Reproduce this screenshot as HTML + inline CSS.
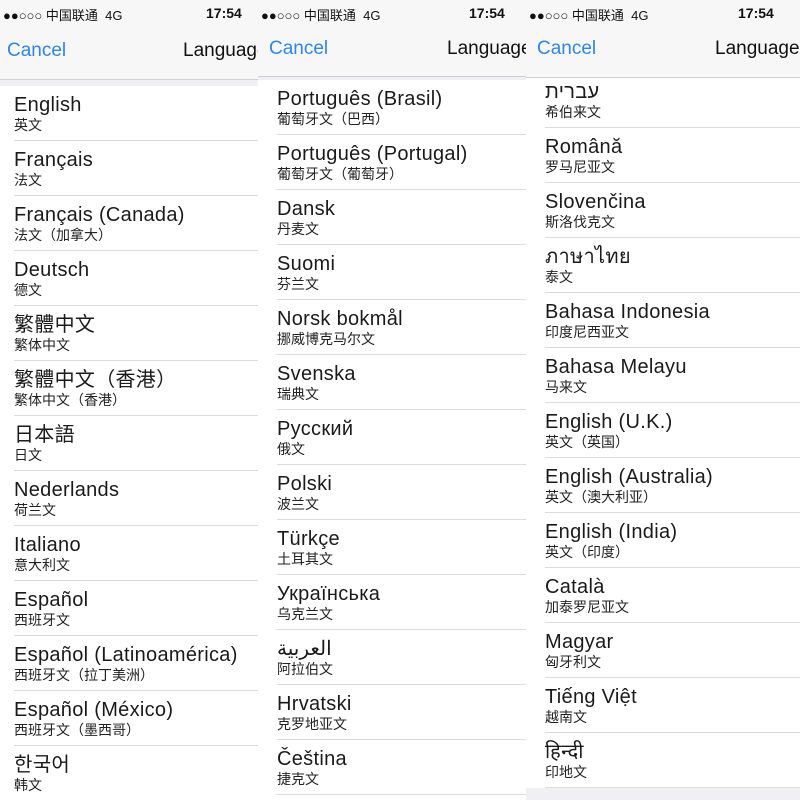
<!DOCTYPE html>
<html><head><meta charset="utf-8"><style>
*{margin:0;padding:0;box-sizing:border-box}
body{width:800px;height:800px;overflow:hidden;background:#fff;font-family:"Liberation Sans","Noto Sans CJK SC",sans-serif;position:relative}
.p{position:absolute;top:0;height:800px;overflow:hidden;background:#fff}
.nav{position:absolute;left:0;right:0;top:0;background:#f7f7f7;border-bottom:1px solid #cfcfcf;z-index:2}
.st{position:absolute;top:5px;font-size:13px;color:#111;white-space:nowrap}
.tm{position:absolute;top:5px;font-size:14px;font-weight:bold;color:#111}
.cancel{position:absolute;font-size:19px;color:#2f86e4}
.title{position:absolute;font-size:19px;color:#111;white-space:nowrap}
.gap{position:absolute;left:0;right:0;background:#efeff4;z-index:1}
.list{position:absolute;left:0;right:0}
.r{height:55px;position:relative;}
.r:after{content:"";position:absolute;left:0;right:0;bottom:0;height:1px;background:#dcdcdc}
.t{position:absolute;top:7px;font-size:20px;color:#1a1a1a;white-space:nowrap;line-height:24px;letter-spacing:0.3px}
.s{position:absolute;top:30px;font-size:14px;color:#222;white-space:nowrap;line-height:18px}
</style></head><body>

<div class="p" style="left:0;width:258px">
 <div class="nav" style="height:80px">
  <div class="st" style="left:3px">●●○○○ 中国联通 &nbsp;4G</div>
  <div class="tm" style="left:206px">17:54</div>
  <div class="cancel" style="left:7px;top:40px">Cancel</div>
  <div class="title" style="left:183px;top:40px">Language</div>
 </div>
 <div class="gap" style="top:80px;height:6px"></div>
 <div class="list" style="top:86px;left:14px">
  <div class="r"><div class="t">English</div><div class="s">英文</div></div>
  <div class="r"><div class="t">Français</div><div class="s">法文</div></div>
  <div class="r"><div class="t">Français (Canada)</div><div class="s">法文（加拿大）</div></div>
  <div class="r"><div class="t">Deutsch</div><div class="s">德文</div></div>
  <div class="r"><div class="t">繁體中文</div><div class="s">繁体中文</div></div>
  <div class="r"><div class="t">繁體中文（香港）</div><div class="s">繁体中文（香港）</div></div>
  <div class="r"><div class="t">日本語</div><div class="s">日文</div></div>
  <div class="r"><div class="t">Nederlands</div><div class="s">荷兰文</div></div>
  <div class="r"><div class="t">Italiano</div><div class="s">意大利文</div></div>
  <div class="r"><div class="t">Español</div><div class="s">西班牙文</div></div>
  <div class="r"><div class="t">Español (Latinoamérica)</div><div class="s">西班牙文（拉丁美洲）</div></div>
  <div class="r"><div class="t">Español (México)</div><div class="s">西班牙文（墨西哥）</div></div>
  <div class="r"><div class="t">한국어</div><div class="s">韩文</div></div>
 </div>
</div>

<div class="p" style="left:258px;width:268px">
 <div class="nav" style="height:77px">
  <div class="st" style="left:3px">●●○○○ 中国联通 &nbsp;4G</div>
  <div class="tm" style="left:211px">17:54</div>
  <div class="cancel" style="left:11px;top:38px">Cancel</div>
  <div class="title" style="left:189px;top:38px">Language</div>
 </div>
 <div class="gap" style="top:77px;height:3px"></div>
 <div class="list" style="top:80px;left:19px">
  <div class="r"><div class="t">Português (Brasil)</div><div class="s">葡萄牙文（巴西）</div></div>
  <div class="r"><div class="t">Português (Portugal)</div><div class="s">葡萄牙文（葡萄牙）</div></div>
  <div class="r"><div class="t">Dansk</div><div class="s">丹麦文</div></div>
  <div class="r"><div class="t">Suomi</div><div class="s">芬兰文</div></div>
  <div class="r"><div class="t">Norsk bokmål</div><div class="s">挪威博克马尔文</div></div>
  <div class="r"><div class="t">Svenska</div><div class="s">瑞典文</div></div>
  <div class="r"><div class="t">Русский</div><div class="s">俄文</div></div>
  <div class="r"><div class="t">Polski</div><div class="s">波兰文</div></div>
  <div class="r"><div class="t">Türkçe</div><div class="s">土耳其文</div></div>
  <div class="r"><div class="t">Українська</div><div class="s">乌克兰文</div></div>
  <div class="r"><div class="t">العربية</div><div class="s">阿拉伯文</div></div>
  <div class="r"><div class="t">Hrvatski</div><div class="s">克罗地亚文</div></div>
  <div class="r"><div class="t">Čeština</div><div class="s">捷克文</div></div>
 </div>
</div>

<div class="p" style="left:526px;width:274px">
 <div class="nav" style="height:78px">
  <div class="st" style="left:3px">●●○○○ 中国联通 &nbsp;4G</div>
  <div class="tm" style="left:212px">17:54</div>
  <div class="cancel" style="left:11px;top:38px">Cancel</div>
  <div class="title" style="left:189px;top:38px">Language</div>
 </div>
 <div class="list" style="top:73px;left:19px">
  <div class="r"><div class="t">עברית</div><div class="s">希伯来文</div></div>
  <div class="r"><div class="t">Română</div><div class="s">罗马尼亚文</div></div>
  <div class="r"><div class="t">Slovenčina</div><div class="s">斯洛伐克文</div></div>
  <div class="r"><div class="t">ภาษาไทย</div><div class="s">泰文</div></div>
  <div class="r"><div class="t">Bahasa Indonesia</div><div class="s">印度尼西亚文</div></div>
  <div class="r"><div class="t">Bahasa Melayu</div><div class="s">马来文</div></div>
  <div class="r"><div class="t">English (U.K.)</div><div class="s">英文（英国）</div></div>
  <div class="r"><div class="t">English (Australia)</div><div class="s">英文（澳大利亚）</div></div>
  <div class="r"><div class="t">English (India)</div><div class="s">英文（印度）</div></div>
  <div class="r"><div class="t">Català</div><div class="s">加泰罗尼亚文</div></div>
  <div class="r"><div class="t">Magyar</div><div class="s">匈牙利文</div></div>
  <div class="r"><div class="t">Tiếng Việt</div><div class="s">越南文</div></div>
  <div class="r"><div class="t">हिन्दी</div><div class="s">印地文</div></div>
 </div>
 <div class="gap" style="top:788px;height:12px"></div>
</div>
</body></html>
